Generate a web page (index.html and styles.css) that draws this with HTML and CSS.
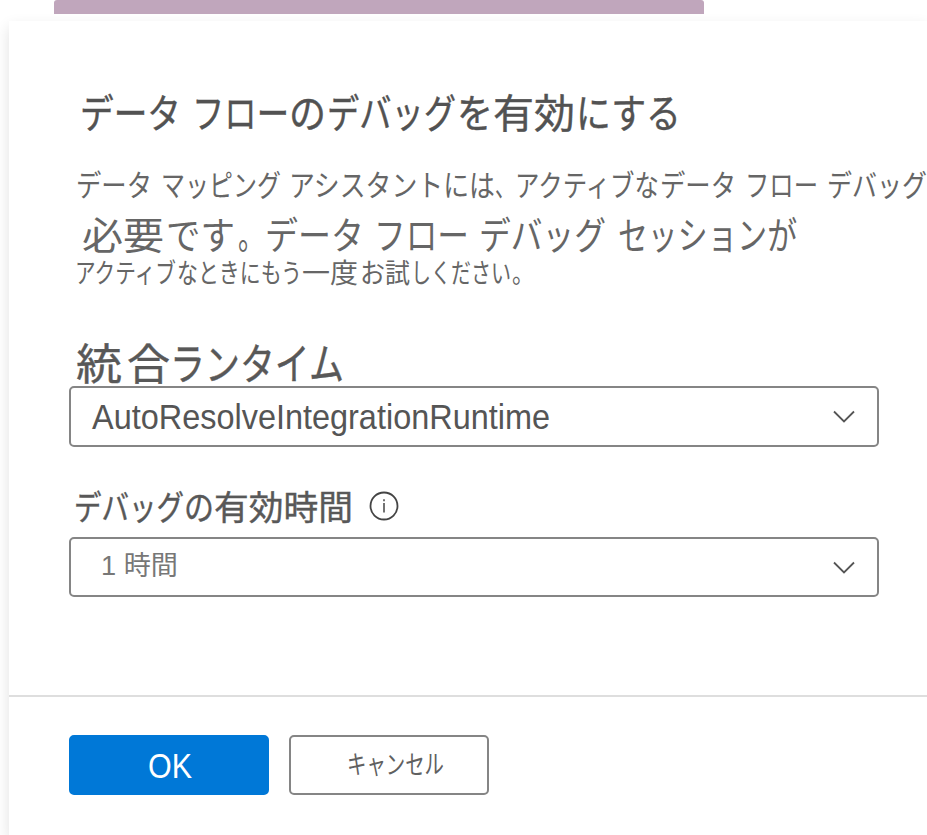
FILE: index.html
```html
<!DOCTYPE html>
<html lang="ja">
<head>
<meta charset="utf-8">
<title>データ フローのデバッグを有効にする</title>
<link rel="stylesheet" href="styles.css">
</head>
<body>
<div class="backdrop-bar"></div>
<main class="dialog">
  <section class="content">
    <h1 class="line title"><svg height="50"><text y="41"><tspan x="-2" textLength="101" lengthAdjust="spacingAndGlyphs">データ</tspan> <tspan x="110" textLength="97" lengthAdjust="spacingAndGlyphs">フロー</tspan><tspan x="207" textLength="37" lengthAdjust="spacingAndGlyphs">の</tspan><tspan x="245" textLength="129" lengthAdjust="spacingAndGlyphs">デバッグ</tspan><tspan x="375" textLength="36" lengthAdjust="spacingAndGlyphs">を</tspan><tspan x="411" textLength="82" lengthAdjust="spacingAndGlyphs">有効</tspan><tspan x="494" textLength="105" lengthAdjust="spacingAndGlyphs">にする</tspan></text></svg></h1>
    <div class="description">
      <p class="line first"><svg height="42"><text y="31"><tspan x="-1" textLength="76" lengthAdjust="spacingAndGlyphs">データ</tspan> <tspan x="84" textLength="120" lengthAdjust="spacingAndGlyphs">マッピング</tspan> <tspan x="212" textLength="206" lengthAdjust="spacingAndGlyphs">アシスタントには</tspan><tspan x="418" textLength="20" lengthAdjust="spacingAndGlyphs">、</tspan><tspan x="438" textLength="144" lengthAdjust="spacingAndGlyphs">アクティブな</tspan><tspan x="583" textLength="76" lengthAdjust="spacingAndGlyphs">データ</tspan> <tspan x="668" textLength="73" lengthAdjust="spacingAndGlyphs">フロー</tspan> <tspan x="750" textLength="100" lengthAdjust="spacingAndGlyphs">デバッグ</tspan></text></svg></p>
      <p class="line second"><svg height="46"><text y="35"><tspan x="-1" textLength="82" lengthAdjust="spacingAndGlyphs">必要</tspan><tspan x="83" textLength="69" lengthAdjust="spacingAndGlyphs">です</tspan><tspan x="155" textLength="26" lengthAdjust="spacingAndGlyphs">。</tspan><tspan x="182" textLength="99" lengthAdjust="spacingAndGlyphs">データ</tspan> <tspan x="291" textLength="95" lengthAdjust="spacingAndGlyphs">フロー</tspan> <tspan x="396" textLength="127" lengthAdjust="spacingAndGlyphs">デバッグ</tspan> <tspan x="535" textLength="179" lengthAdjust="spacingAndGlyphs">セッションが</tspan></text></svg></p>
      <p class="line third"><svg height="34"><text y="26"><tspan x="-1" textLength="101" lengthAdjust="spacingAndGlyphs">アクティブ</tspan><tspan x="101" textLength="125" lengthAdjust="spacingAndGlyphs">なときにもう</tspan><tspan x="226" textLength="56" lengthAdjust="spacingAndGlyphs">一度</tspan><tspan x="284" textLength="50" lengthAdjust="spacingAndGlyphs">お試</tspan><tspan x="335" textLength="100" lengthAdjust="spacingAndGlyphs">しください</tspan><tspan x="436" textLength="22" lengthAdjust="spacingAndGlyphs">。</tspan></text></svg></p>
    </div>
    <div class="field runtime">
      <div class="line label"><svg height="46"><text y="40"><tspan x="-1" textLength="46" lengthAdjust="spacingAndGlyphs">統</tspan><tspan x="50" textLength="43" lengthAdjust="spacingAndGlyphs">合</tspan><tspan x="93" textLength="174" lengthAdjust="spacingAndGlyphs">ランタイム</tspan></text></svg></div>
      <div class="select"><svg class="value" height="50"><text x="1" y="36.5" textLength="458" lengthAdjust="spacingAndGlyphs">AutoResolveIntegrationRuntime</text></svg><svg class="chevron" width="22" height="13" viewBox="0 0 22 13"><path d="M1 1.5 11 11.5 21 1.5"/></svg></div>
    </div>
    <div class="field duration">
      <div class="line label"><svg width="278" height="48"><text y="37"><tspan x="-1" textLength="110" lengthAdjust="spacingAndGlyphs">デバッグ</tspan><tspan x="109" textLength="30" lengthAdjust="spacingAndGlyphs">の</tspan><tspan x="139" textLength="139" lengthAdjust="spacingAndGlyphs">有効時間</tspan></text></svg><svg class="info" width="30" height="30" viewBox="0 0 30 30"><circle cx="15" cy="15" r="13.5"/><path d="M15 12v9.5M15 8.2v2"/></svg></div>
      <div class="select"><svg class="value" height="50"><text x="0" y="33" textLength="77" lengthAdjust="spacingAndGlyphs">1 時間</text></svg><svg class="chevron" width="22" height="13" viewBox="0 0 22 13"><path d="M1 1.5 11 11.5 21 1.5"/></svg></div>
    </div>
  </section>
  <footer class="actions">
    <button class="button primary"><svg width="44" height="36"><text x="1" y="31" textLength="44" lengthAdjust="spacingAndGlyphs">OK</text></svg></button>
    <button class="button cancel"><svg width="98" height="34"><text x="1" y="26" textLength="97" lengthAdjust="spacingAndGlyphs">キャンセル</text></svg></button>
  </footer>
</main>
</body>
</html>
```
FILE: styles.css
```css
* { box-sizing: border-box; }
body { margin: 0; height: 835px; overflow: hidden; background: #fff; font-family: "Liberation Sans", "Noto Sans CJK JP", sans-serif; display: flex; flex-direction: column; }
h1, p { margin: 0; font-weight: 400; }
svg { display: block; overflow: visible; flex: none; }
.backdrop-bar { width: 650px; height: 14px; margin-left: 54px; background: #c0a6bc; border-radius: 3px 3px 0 0; flex: none; }
.dialog { margin: 7px 0 0 9px; width: 918px; height: 814px; background: #fff; box-shadow: 0 6px 14px rgba(0,0,0,.12); }
.content { height: 674px; padding: 66px 0 0 60px; display: flex; flex-direction: column; }
.line { display: flex; flex: none; color: #666; }
.line text, .value text, .button text { fill: currentColor; }
.title text, .label text { stroke: currentColor; stroke-width: .4px; }
.title { height: 50px; margin-left: 13px; font-size: 40px; color: #525252; }
.description { margin-top: 28px; height: 130px; }
.first { height: 49px; margin-left: 8px; font-size: 30px; }
.second { height: 43px; margin-left: 14px; font-size: 38px; }
.third { height: 34px; margin-left: 7px; font-size: 27px; }
.field { width: 810px; }
.runtime { margin-top: 45px; height: 107px; }
.runtime .label { height: 46px; margin-left: 8px; font-size: 43px; color: #585858; }
.select { width: 810px; height: 61px; border: 2px solid #858585; border-radius: 5px; display: flex; justify-content: space-between; align-items: center; padding: 0 22px 0 20px; color: #555; }
.runtime .value { font-size: 35px; }
.duration { margin-top: 36px; }
.duration .label { height: 54px; margin-left: 6px; font-size: 34px; color: #585858; }
.duration .select { height: 60px; padding-left: 30px; color: #777; }
.duration .value { font-size: 27px; }
.chevron, .info { fill: none; stroke: #555; stroke-width: 1.8; }
.info { margin: 8px 0 0 16px; stroke: #444; }
.info path { stroke-width: 1.5; }
.actions { height: 140px; border-top: 2px solid #dedede; padding: 38px 60px; display: flex; gap: 20px; }
.button { width: 200px; height: 60px; padding: 0; border: 2px solid #858585; border-radius: 5px; background: #fff; color: #606060; font: 26px "Liberation Sans", "Noto Sans CJK JP", sans-serif; display: flex; align-items: center; justify-content: center; }
.cancel { padding-left: 12px; }
.primary { background: #0078d7; border-color: #0078d7; color: #fff; font-size: 35px; }
```
